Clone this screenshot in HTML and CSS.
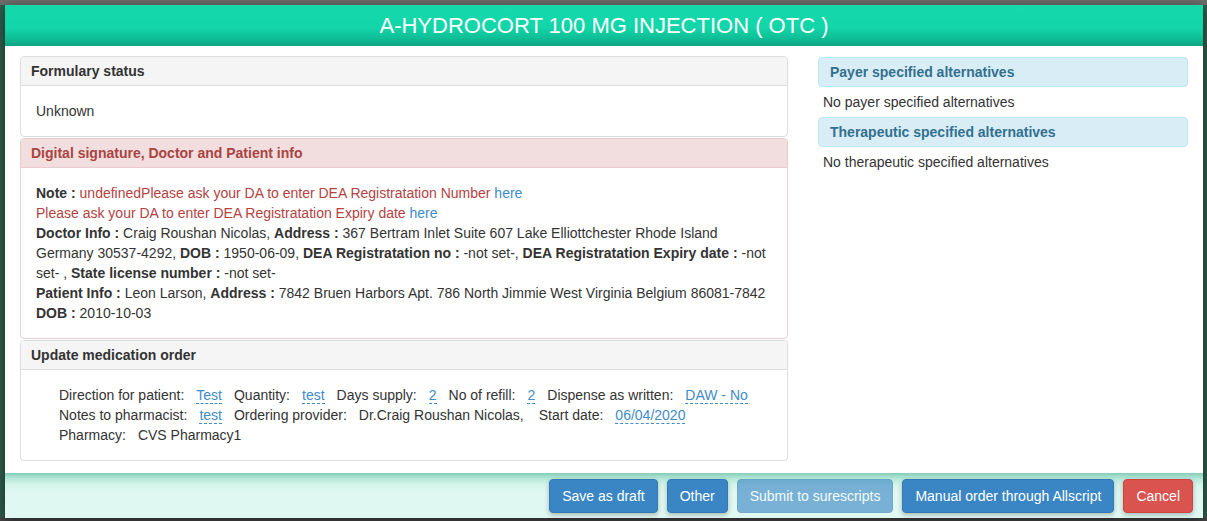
FILE: index.html
```html
<!DOCTYPE html>
<html>
<head>
<meta charset="utf-8">
<link rel="stylesheet" href="styles.css">
</head>
<body>
<div class="backdrop">
  <div class="modal">
    <div class="modal-header">A-HYDROCORT 100 MG INJECTION ( OTC )</div>
    <div class="modal-body">
      <div class="col-left">
        <div class="panel">
          <div class="panel-heading">Formulary status</div>
          <div class="panel-body">Unknown</div>
        </div>
        <div class="panel panel-danger">
          <div class="panel-heading">Digital signature, Doctor and Patient info</div>
          <div class="panel-body">
            <div><b>Note :</b> <span class="danger">undefinedPlease ask your DA to enter DEA Registratation Number</span> <a class="link">here</a></div>
            <div><span class="danger">Please ask your DA to enter DEA Registratation Expiry date</span> <a class="link">here</a></div>
            <div><b>Doctor Info :</b> Craig Roushan Nicolas, <b>Address :</b> 367 Bertram Inlet Suite 607 Lake Elliottchester Rhode Island Germany 30537-4292, <b>DOB :</b> 1950-06-09, <b>DEA Registratation no :</b> -not set-, <b>DEA Registratation Expiry date :</b> -not set- , <b>State license number :</b> -not set-</div>
            <div><b>Patient Info :</b> Leon Larson, <b>Address :</b> 7842 Bruen Harbors Apt. 786 North Jimmie West Virginia Belgium 86081-7842 <b>DOB :</b> 2010-10-03</div>
          </div>
        </div>
        <div class="panel">
          <div class="panel-heading">Update medication order</div>
          <div class="panel-body">
            <div class="order">
              <div class="order-line">
                <span>Direction for patient:</span><a class="editable">Test</a>
                <span>Quantity:</span><a class="editable">test</a>
                <span>Days supply:</span><a class="editable">2</a>
                <span>No of refill:</span><a class="editable">2</a>
                <span>Dispense as written:</span><a class="editable">DAW - No</a>
              </div>
              <div class="order-line">
                <span>Notes to pharmacist:</span><a class="editable">test</a>
                <span>Ordering provider:</span><span class="wide">Dr.Craig Roushan Nicolas,</span>
                <span>Start date:</span><a class="editable">06/04/2020</a>
              </div>
              <div class="order-line">
                <span>Pharmacy:</span><span>CVS Pharmacy1</span>
              </div>
            </div>
          </div>
        </div>
      </div>
      <div class="col-right">
        <div class="info-heading">Payer specified alternatives</div>
        <div class="info-text">No payer specified alternatives</div>
        <div class="info-heading">Therapeutic specified alternatives</div>
        <div class="info-text">No therapeutic specified alternatives</div>
      </div>
    </div>
    <div class="modal-footer">
      <button class="btn btn-primary">Save as draft</button>
      <button class="btn btn-primary">Other</button>
      <button class="btn btn-primary disabled">Submit to surescripts</button>
      <button class="btn btn-primary">Manual order through Allscript</button>
      <button class="btn btn-danger">Cancel</button>
    </div>
  </div>
</div>
</body>
</html>
```
FILE: styles.css
```css
html, body {
  margin: 0;
  padding: 0;
}
body {
  font-family: "Liberation Sans", Arial, sans-serif;
  font-size: 14px;
  line-height: 20px;
  color: #333;
  background: linear-gradient(to bottom, #6d6d6d 0, #6d6d6d 5px, #2f5e4c 5px, #2f5e4c 517px, #464646 517px);
  height: 521px;
  overflow: hidden;
}
.backdrop {
  padding: 5px 4px 4px 5px;
}
.modal {
  width: 1198px;
  background: #fff;
  box-shadow: 0 3px 12px rgba(0, 0, 0, 0.5);
}
.modal-header {
  height: 41px;
  line-height: 41px;
  text-align: center;
  color: #fff;
  font-size: 22px;
  background: linear-gradient(to bottom, #13d9ab 0%, #12d6a9 55%, #0fbf97 80%, #0ca481 100%);
}
.modal-body {
  display: flex;
  gap: 30px;
  padding: 10px 15px 12px 15px;
}
.col-left {
  width: 768px;
  flex: none;
}
.col-right {
  flex: 1;
  padding-top: 1px;
}
.panel {
  border: 1px solid #ddd;
  border-radius: 4px;
  margin-bottom: 1px;
  background: #fff;
}
.panel:last-child {
  margin-bottom: 0;
}
.panel-heading {
  padding: 6px 10px;
  line-height: 16px;
  font-weight: bold;
  background: #f5f5f5;
  border-bottom: 1px solid #ddd;
  border-radius: 3px 3px 0 0;
}
.panel-body {
  padding: 15px;
}
.panel-danger {
  border-color: #ebccd1;
}
.panel-danger .panel-heading {
  background: #f2dede;
  color: #a94442;
  border-bottom-color: #ebccd1;
}
.danger {
  color: #b5423f;
}
.link {
  color: #428bca;
}
.order {
  padding-left: 23px;
}
.order-line {
  display: flex;
  gap: 12px;
  white-space: nowrap;
}
.editable {
  color: #428bca;
  border-bottom: 1px dashed #428bca;
  line-height: 16px;
  height: 16px;
  margin-top: 2px;
}
.wide {
  margin-right: 3px;
}
.info-heading {
  border: 1px solid #bce8f1;
  background: #d9edf7;
  color: #31708f;
  border-radius: 4px;
  padding: 6px 11px;
  line-height: 16px;
  font-weight: bold;
  margin-bottom: 5px;
}
.info-text {
  padding-left: 5px;
  margin-bottom: 5px;
}
.modal-footer {
  height: 45px;
  box-sizing: border-box;
  padding: 6px 10px 5px;
  display: flex;
  justify-content: flex-end;
  align-items: flex-start;
  gap: 9px;
  background: linear-gradient(to bottom, #86cdb7 0px, #b8e9da 6px, #d6f5eb 12px, #dff8f1 20px, #dff8f1 100%);
}
.btn {
  font-family: "Liberation Sans", Arial, sans-serif;
  font-size: 14px;
  line-height: 20px;
  height: 34px;
  padding: 6px 12px;
  border: 1px solid transparent;
  border-radius: 4px;
  color: #fff;
  box-shadow: 0 2px 5px rgba(0, 0, 0, 0.25);
  cursor: pointer;
}
.btn-primary {
  background: #3a86c5;
  border-color: #3279b5;
}
.btn-primary.disabled {
  opacity: 0.62;
  box-shadow: none;
}
.btn-danger {
  background: #d9534f;
  border-color: #d0433e;
}
```
